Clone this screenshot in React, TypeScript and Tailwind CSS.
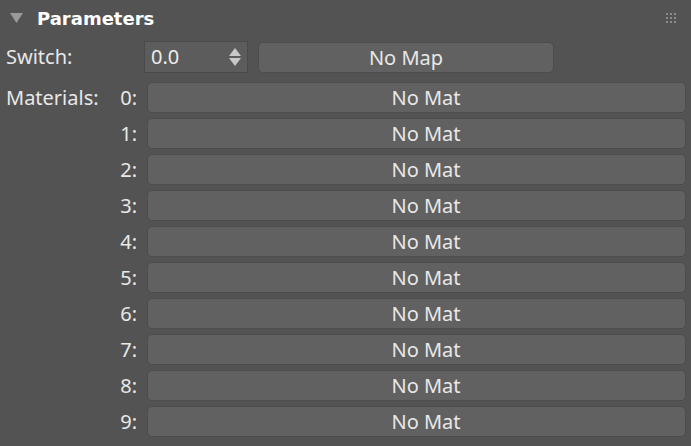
import React from "react";

const slots = ["0", "1", "2", "3", "4", "5", "6", "7", "8", "9"];

const Grip = () => (
  <svg width="12" height="12" viewBox="0 0 12 12" className="text-[#8c8c8c]">
    {[0, 4, 8].map((y) =>
      [0, 4, 8].map((x) => (
        <rect key={`${x}-${y}`} x={x + 1} y={y + 1} width="2" height="2" fill="currentColor" />
      ))
    )}
  </svg>
);

const Spinner = () => (
  <div className="flex items-center w-[104px] h-[32px] bg-[#5c5c5c] border border-[#4a4a4a] pl-[6px] pr-[5px]">
    <span className="flex-1 text-[20px] text-[#ececec]">0.0</span>
    <svg width="14" height="20" viewBox="0 0 14 20" className="text-[#c8c8c8]">
      <path d="M7 1 L13 9 L1 9 Z" fill="currentColor" />
      <path d="M1 11 L13 11 L7 19 Z" fill="currentColor" />
    </svg>
  </div>
);

export default function App() {
  return (
    <div
      className="w-[691px] h-[446px] overflow-hidden bg-[#535353] text-[#e8e8e8]"
      style={{ fontFamily: '"Noto Sans", "Open Sans", sans-serif' }}
    >
      <div className="flex items-center h-[36px] pl-[10px] pr-[14px]">
        <svg width="13" height="10" viewBox="0 0 13 10" className="text-[#9a9a9a]">
          <path d="M0 0 L13 0 L6.5 10 Z" fill="currentColor" />
        </svg>
        <span
          className="ml-[14px] text-[18px] font-bold text-white"
          style={{ fontFamily: '"DejaVu Sans", sans-serif' }}
        >
          Parameters
        </span>
        <div className="ml-auto">
          <Grip />
        </div>
      </div>

      <div className="flex items-center mt-[5px] h-[32px] pl-[6px]">
        <span className="w-[138px] text-[20px]">Switch:</span>
        <Spinner />
        <button className="ml-[10px] w-[296px] h-[31px] rounded-[5px] bg-[#616161] border border-[#4c4c4c] text-[20px] text-[#e8e8e8]">
          No Map
        </button>
      </div>

      <div className="flex pl-[6px] mt-[9px] pr-[5px]">
        <span className="w-[96px] text-[20px] leading-[31px]">Materials:</span>
        <div className="flex flex-col gap-[5px] flex-1">
          {slots.map((s) => (
            <div key={s} className="flex items-center h-[31px]">
              <span className="w-[35px] text-right text-[20px]">{s}:</span>
              <button className="ml-[10px] flex-1 h-[31px] rounded-[5px] bg-[#616161] border border-[#4c4c4c] pl-[19px] text-[20px] text-[#e8e8e8]">
                No Mat
              </button>
            </div>
          ))}
        </div>
      </div>
    </div>
  );
}
